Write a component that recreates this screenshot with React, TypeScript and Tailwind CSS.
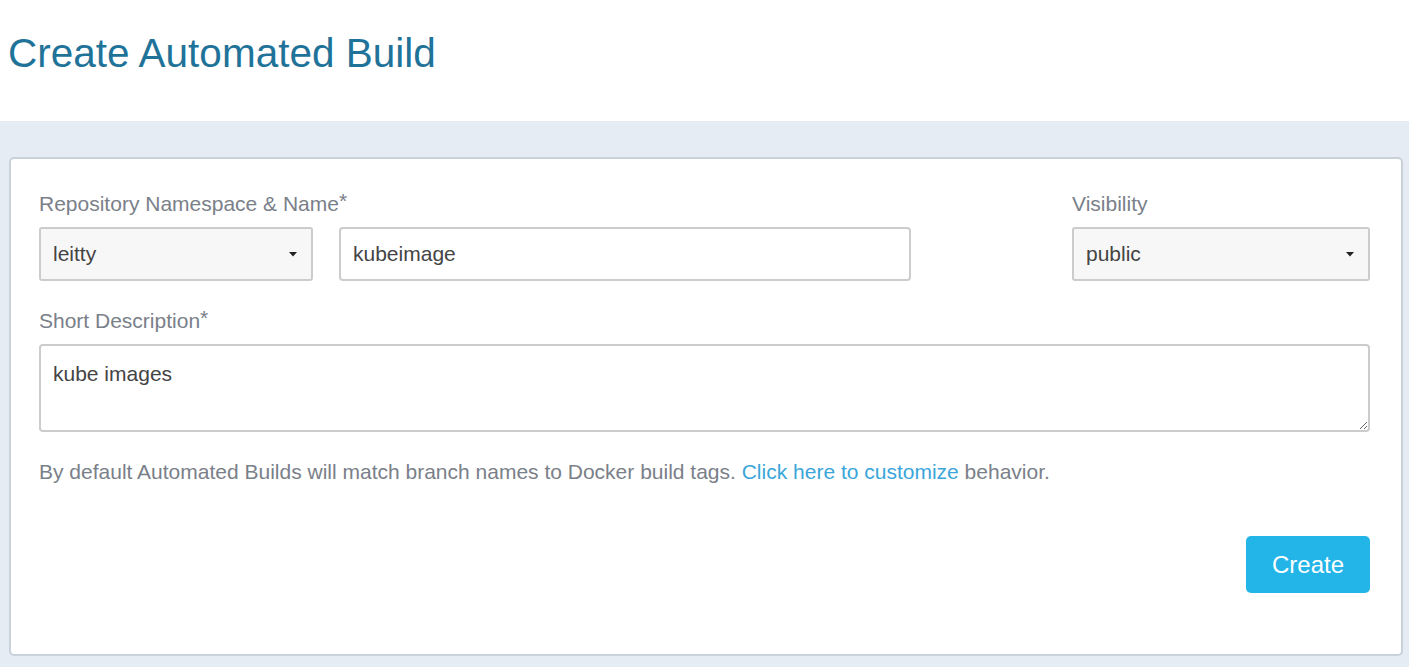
const font = { fontFamily: '"Liberation Sans", Arial, sans-serif' };

function Caret() {
  return (
    <svg width="8" height="5" viewBox="0 0 8 5" className="shrink-0">
      <path d="M0 0h8L4 4.5z" fill="#222" />
    </svg>
  );
}

function SelectBox({ value, width }: { value: string; width: string }) {
  return (
    <div
      className={`${width} h-[54px] flex items-center justify-between pl-[12px] pr-[14px] bg-[#f7f7f7] border-2 border-[#cccccc] rounded-[3px] text-[21px] text-[#444]`}
    >
      <span>{value}</span>
      <Caret />
    </div>
  );
}

export default function App() {
  return (
    <div className="min-h-screen bg-[#e5ecf4]" style={font}>
      <header className="bg-white h-[121px] pl-[8px] pt-[29px]">
        <h1 className="text-[40.5px] leading-[48px] text-[#1f7399]">Create Automated Build</h1>
      </header>

      <main className="pt-[36px] pl-[9px] pr-[6px] pb-[12px]">
        <div className="bg-white border-2 border-[#c9d1da] rounded-[5px] pt-[33px] pl-[28px] pr-[31px] pb-[61px]">
          <div className="flex items-start">
            <div className="flex flex-col">
              <label className="text-[21px] leading-[24px] text-[#7a8089]">
                Repository Namespace &amp; Name<span className="relative -top-[3px]">*</span>
              </label>
              <div className="flex gap-[26px] mt-[11px]">
                <SelectBox value="leitty" width="w-[274px]" />
                <div className="w-[572px] h-[54px] flex items-center pl-[12px] border-2 border-[#cccccc] rounded-[4px] text-[21px] text-[#444]">
                  kubeimage
                </div>
              </div>
            </div>
            <div className="flex-1" />
            <div className="flex flex-col w-[298px]">
              <label className="text-[21px] leading-[24px] text-[#7a8089]">Visibility</label>
              <div className="mt-[11px]">
                <SelectBox value="public" width="w-[298px]" />
              </div>
            </div>
          </div>

          <label className="block mt-[28px] text-[21px] leading-[24px] text-[#7a8089]">
            Short Description<span className="relative -top-[3px]">*</span>
          </label>
          <textarea
            readOnly
            defaultValue="kube images"
            className="block w-full mt-[11px] h-[88px] border-2 border-[#cccccc] rounded-[4px] pt-[16px] pl-[12px] text-[21px] leading-[24px] text-[#444] outline-none"
            style={font}
          />

          <p className="mt-[28px] text-[21px] leading-[24px] text-[#7a8089]">
            By default Automated Builds will match branch names to Docker build tags.{' '}
            <a className="text-[#3aa6da]">Click here to customize</a> behavior.
          </p>

          <div className="flex justify-end mt-[52px]">
            <button className="w-[124px] h-[57px] rounded-[5px] bg-[#23b5e8] text-white text-[24px]">
              Create
            </button>
          </div>
        </div>
      </main>
    </div>
  );
}
